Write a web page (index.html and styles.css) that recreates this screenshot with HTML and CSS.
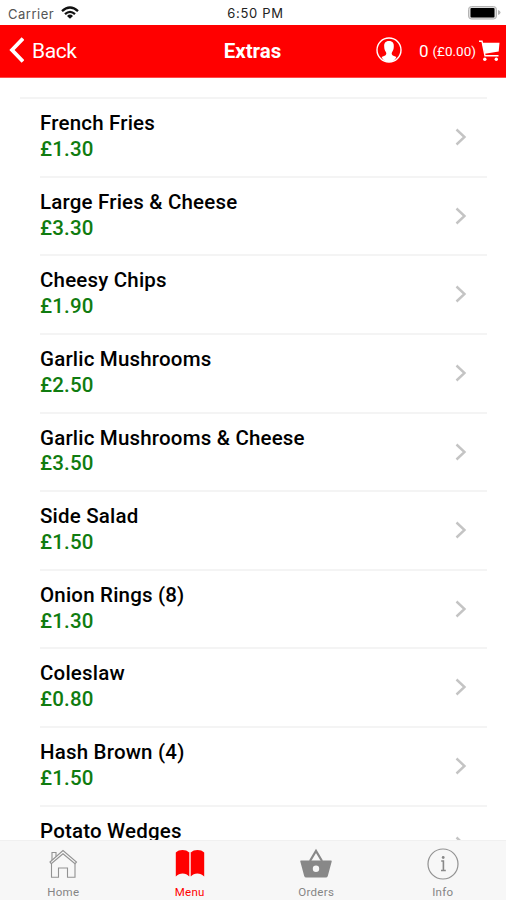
FILE: index.html
```html
<!DOCTYPE html>
<html lang="en">
<head>
<meta charset="utf-8">
<title>Extras</title>
<link rel="stylesheet" href="styles.css">
</head>
<body>
<div class="app">
  <div class="status">
    <div class="carrier"><span>Carrier</span>
      <svg class="wifi" viewBox="0 0 18 13" width="18" height="13"><g fill="none" stroke="#111" stroke-width="2.3"><path d="M1 5.2Q9-2.2 17 5.2"/><path d="M4 8.2Q9 3.600 14 8.2"/></g><path d="M6 9.9Q9 7.3 12 9.900L9 12.8z" fill="#111"/></svg>
    </div>
    <span class="time">6:50 PM</span>
    <svg class="battery" viewBox="0 0 34 15" width="34" height="15"><rect x="1.500" y="1.500" width="28" height="12.500" rx="3" fill="#ddd" stroke="#b4b4b4"/><rect x="3.500" y="3" width="24" height="9.500" rx="1" fill="#000"/><path d="M31 5v5q2.500-.8 2.500-2.500T31 5z" fill="#b4b4b4"/></svg>
  </div>
  <header class="nav">
    <div class="back">
      <svg viewBox="0 0 16 26" width="16" height="26"><path d="M15 1.500L4 13l11 11.500" fill="none" stroke="#fff" stroke-width="3.800"/></svg>
      <span>Back</span>
    </div>
    <h1 class="title">Extras</h1>
    <div class="account">
      <svg class="user" viewBox="0 0 26 26" width="26" height="26"><circle cx="13" cy="13" r="12" fill="none" stroke="#fff" stroke-width="1.400"/><path d="M13 4c3.800 0 5 2.400 4.800 5.600 0 2.800-.7 4.200-1.800 5.600-.6 1.200-.3 2.600.8 3.200l3.600 1.600C19 23.300 16.700 25 13 25s-6-1.700-7.400-5l3.600-1.600c1.100-.6 1.400-2 .8-3.200C8.900 13.800 8.200 12.400 8.200 9.600 8 6.400 9.200 4 13 4z" fill="#fff"/></svg>
      <span class="count">0</span><span class="total">(£0.00)</span>
      <svg class="cart" viewBox="0 0 21 22" width="21" height="22"><path d="M3 2.800h17.500l-.8 8.700L6 13.800z" fill="#fff"/><path d="M0 1.200h3L6 15.800h13.500" fill="none" stroke="#fff" stroke-width="1.400"/><circle cx="5.800" cy="19.300" r="1.700" fill="#fff"/><circle cx="17.300" cy="19.300" r="1.700" fill="#fff"/></svg>
    </div>
  </header>
  <main class="content">
    <ul class="list">
      <li class="row"><div><p class="name">French Fries</p><p class="price">£1.30</p></div><svg class="chev" viewBox="0 0 12 18"><path d="M1.500 1.500L9.500 9l-8 7.500"/></svg></li>
      <li class="row"><div><p class="name">Large Fries &amp; Cheese</p><p class="price">£3.30</p></div><svg class="chev" viewBox="0 0 12 18"><path d="M1.500 1.500L9.500 9l-8 7.500"/></svg></li>
      <li class="row"><div><p class="name">Cheesy Chips</p><p class="price">£1.90</p></div><svg class="chev" viewBox="0 0 12 18"><path d="M1.500 1.500L9.500 9l-8 7.500"/></svg></li>
      <li class="row"><div><p class="name">Garlic Mushrooms</p><p class="price">£2.50</p></div><svg class="chev" viewBox="0 0 12 18"><path d="M1.500 1.500L9.500 9l-8 7.500"/></svg></li>
      <li class="row"><div><p class="name">Garlic Mushrooms &amp; Cheese</p><p class="price">£3.50</p></div><svg class="chev" viewBox="0 0 12 18"><path d="M1.500 1.500L9.500 9l-8 7.500"/></svg></li>
      <li class="row"><div><p class="name">Side Salad</p><p class="price">£1.50</p></div><svg class="chev" viewBox="0 0 12 18"><path d="M1.500 1.500L9.500 9l-8 7.500"/></svg></li>
      <li class="row"><div><p class="name">Onion Rings (8)</p><p class="price">£1.30</p></div><svg class="chev" viewBox="0 0 12 18"><path d="M1.500 1.500L9.500 9l-8 7.500"/></svg></li>
      <li class="row"><div><p class="name">Coleslaw</p><p class="price">£0.80</p></div><svg class="chev" viewBox="0 0 12 18"><path d="M1.500 1.500L9.500 9l-8 7.500"/></svg></li>
      <li class="row"><div><p class="name">Hash Brown (4)</p><p class="price">£1.50</p></div><svg class="chev" viewBox="0 0 12 18"><path d="M1.500 1.500L9.500 9l-8 7.500"/></svg></li>
      <li class="row"><div><p class="name">Potato Wedges</p></div><svg class="chev" viewBox="0 0 12 18"><path d="M1.500 1.500L9.500 9l-8 7.500"/></svg></li>
    </ul>
  </main>
  <nav class="tabs">
    <div class="tab"><svg viewBox="0 0 32 32"><g fill="none" stroke="#929292" stroke-width="1.100"><path d="M3 14L16 2.500 29.500 14l-1.500 1.700L16 5.800 4.300 15.700z"/><path d="M5 12V4.500h4v4M4.500 15.700v13.500h7V20h9v9.200h7.500V15.700"/></g></svg><span>Home</span></div>
    <div class="tab active"><svg viewBox="0 0 32 32"><path d="M1.800 4.500C5 1.200 12 1.200 15.200 4.500v24C12 24.500 5.500 24.500 1.800 28.500zM16.800 4.500C20 1.200 27 1.200 30.200 4.500v24C26.500 24.500 20 24.500 16.800 28.500z" fill="#f00"/><path d="M16 4v24" stroke="#ff9a9a" stroke-width="1"/></svg><span>Menu</span></div>
    <div class="tab"><svg viewBox="0 0 32 32"><path d="M10 13l6-10 6 10" fill="none" stroke="#888" stroke-width="2.200"/><path fill-rule="evenodd" fill="#888" d="M1 12.500h30q1 0 .7 1L27.800 28q-.5 1.500-2 1.500H6.200q-1.500 0-2-1.500L.3 13.500q-.3-1 .7-1zM16 17.500a3.200 3.200 0 1 0 0 6.400 3.200 3.200 0 0 0 0-6.400z"/></svg><span>Orders</span></div>
    <div class="tab"><svg viewBox="0 0 32 32"><circle cx="16" cy="16" r="15" fill="none" stroke="#929292" stroke-width="1.200"/><circle cx="16.200" cy="9.500" r="1.400" fill="#888"/><path d="M14.200 13h2.200v9.500M14 22.500h4.800" fill="none" stroke="#888" stroke-width="1.600"/></svg><span>Info</span></div>
  </nav>
</div>
</body>
</html>
```
FILE: styles.css
```css
* { box-sizing: border-box; margin: 0; padding: 0; }
body { font-family: Roboto, "Liberation Sans", sans-serif; background: #fff; color: #000; }
svg { display: block; flex: none; }
.app { width: 506px; height: 900px; display: flex; flex-direction: column; overflow: hidden; }

.status { height: 25px; flex: none; display: grid; grid-template-columns: 1fr auto 1fr; align-items: center; padding: 2px 5px 0 8px; color: #222; font-family: Inter, "Liberation Sans", sans-serif; }
.carrier { display: flex; align-items: center; gap: 7px; font-size: 13px; color: #555; letter-spacing: .5px; }
.wifi { margin-top: -2px; }
.time { font-size: 13px; letter-spacing: .7px; padding-left: 2px; margin-top: -1px; }
.battery { justify-self: end; margin-top: -2px; }

.nav { height: 53px; flex: none; display: grid; grid-template-columns: 1fr auto 1fr; align-items: center; background: #f00; color: #fff; padding: 0 6px 0 8px; border-bottom: 1px solid #ff4a4a; }
.back { display: flex; align-items: center; gap: 8px; font-size: 21px; letter-spacing: -.4px; }
.back svg { margin-top: -3px; }
.title { font-size: 20.500px; font-weight: 700; padding-right: 3px; margin-top: -1px; }
.account { display: flex; align-items: center; justify-content: flex-end; }
.user { margin-right: 17px; margin-top: -3px; }
.count { font-size: 17px; margin-right: 4px; }
.total { font-size: 13.500px; margin-right: 3px; }

.content { flex: 1; min-height: 0; overflow: hidden; padding: 19px 19px 0 20px; }
.list { list-style: none; border-top: 2px solid #f4f4f4; padding-left: 20px; }
.row { height: 78.650px; display: flex; justify-content: space-between; padding: 12px 20px 0 0; border-bottom: 2px solid #f4f4f4; font-size: 20.500px; line-height: 25.900px; font-weight: 500; letter-spacing: .19px; }
.price { color: #107c10; }
.chev { width: 12px; height: 18px; margin-top: 17px; fill: none; stroke: #c4c4c4; stroke-width: 2.400; }

.tabs { height: 60px; flex: none; display: grid; grid-template-columns: repeat(4, 1fr); background: #f7f7f7; border-top: 1px solid #f0f0f0; }
.tab { display: flex; flex-direction: column; align-items: center; padding-top: 7px; color: #858585; font-size: 11.500px; letter-spacing: .3px; line-height: 14px; }
.tab svg { width: 32px; height: 32px; margin-bottom: 5px; }
.tab.active { color: #f00; }
```
